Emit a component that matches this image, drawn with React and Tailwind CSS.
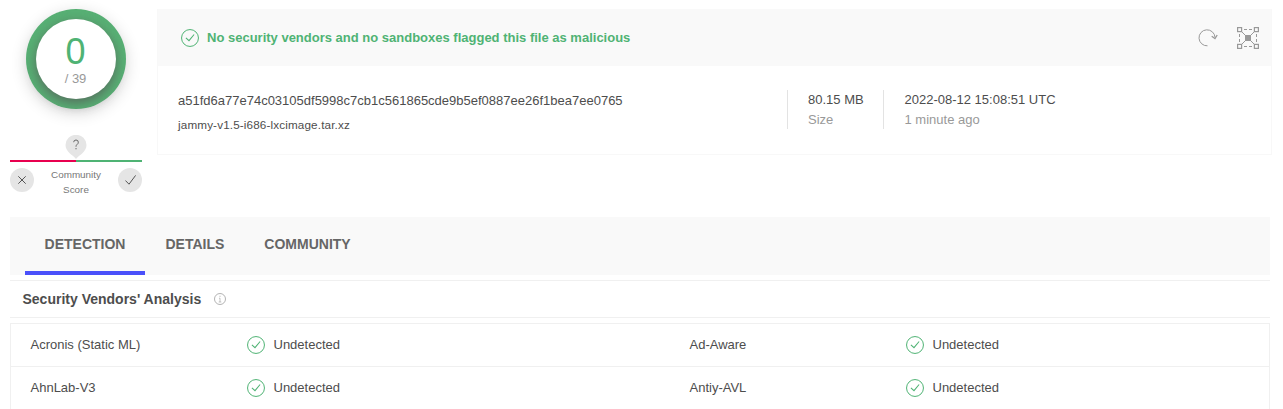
const rows = [
  ["Acronis (Static ML)", "Ad-Aware"],
  ["AhnLab-V3", "Antiy-AVL"],
];

function CheckCircle({ className = "" }) {
  return (
    <svg className={`h-[18px] w-[18px] shrink-0 ${className}`} viewBox="0 0 18 18" fill="none" stroke="#4fb374">
      <circle cx="9" cy="9" r="8.45" strokeWidth="1" />
      <path d="M4.9 8.8 8 11.7 13.1 5.5" strokeWidth="1.05" />
    </svg>
  );
}

function Refresh() {
  return (
    <svg className="mr-px h-5 w-5 shrink-0" viewBox="0 0 20 20" fill="none" stroke="#999" strokeWidth="1">
      <path d="M9.500 17.800A8 8 0 1 1 17 9.300" />
      <path d="M13.700 8.300 17 10.500 19.200 7" strokeWidth="1.3" />
    </svg>
  );
}

function GraphIcon() {
  return (
    <svg className="h-[22px] w-[22px] shrink-0" viewBox="0 0 22 22" fill="none" stroke="#999">
      <path d="M5 5 17 17M17 5 5 17" strokeWidth="1" />
      <path d="M7 2.5h3M12 2.5h3M7 19.5h3M12 19.5h3M2.5 7v3M2.5 12v3M19.5 7v3M19.5 12v3" strokeWidth="1" />
      <rect x="8" y="8" width="6" height="6" fill="#999" stroke="none" />
      <g fill="#f9f9f9" strokeWidth="1.2">
        <rect x="0.6" y="0.6" width="4" height="4" />
        <rect x="17.4" y="0.6" width="4" height="4" />
        <rect x="0.6" y="17.4" width="4" height="4" />
        <rect x="17.4" y="17.4" width="4" height="4" />
      </g>
    </svg>
  );
}

function Score() {
  return (
    <div className="flex w-[132px] shrink-0 flex-col items-center">
      <div className="flex h-[100px] w-[100px] items-center justify-center rounded-full bg-[#57b074] shadow-[0_4px_16px_rgba(0,0,0,0.16)]">
        <div className="flex h-20 w-20 flex-col items-center rounded-full bg-white pr-px pt-[14px] shadow-[0_4px_12px_rgba(85,85,85,0.75)]">
          <div className="h-[38px] text-[36px] leading-[38px] text-[#4fb374]">0</div>
          <div className="text-[13px] leading-[16px] text-[#999]">/ 39</div>
        </div>
      </div>
      <div className="mr-px mt-[26px] h-[25px]">
        <svg className="h-[25px] w-[22px]" viewBox="0 0 22 25">
          <path d="M11 24C8 20 .5 17 .5 10A10.500 10.200 0 0 1 21.500 10C21.500 17 14 20 11 24Z" fill="#e5e5e5" />
          <path d="M8.700 7.200Q8.700 5 11 5Q13.300 5 13.300 7.200Q13.300 8.700 12 9.500Q11 10.300 11 11.700M11 13V14.300" fill="none" stroke="#666" strokeWidth="1" />
        </svg>
      </div>
      <div className="flex h-[2px] w-full">
        <div className="w-1/2 bg-[#e8004f]" />
        <div className="w-1/2 bg-[#4fb374]" />
      </div>
      <div className="mt-[6px] flex w-full items-start justify-between">
        <div className="flex h-6 w-6 items-center justify-center rounded-full bg-[#e5e5e5]">
          <svg className="h-2 w-2" viewBox="0 0 8 8" fill="none" stroke="#555"><path d="m.3.3 7.400 7.400M7.700.3.3 7.700" /></svg>
        </div>
        <div className="-mt-px text-center text-[9.900px] leading-[15px] text-[#777]">Community<br />Score</div>
        <div className="flex h-6 w-6 items-center justify-center rounded-full bg-[#e5e5e5]">
          <svg className="h-[10px] w-[11px]" viewBox="0 0 11 10" fill="none" stroke="#555"><path d="M.4 5.500 4 9.200 10.600.4" /></svg>
        </div>
      </div>
    </div>
  );
}

function Vendor({ name }) {
  return (
    <div className="flex w-[659px] shrink-0 items-center">
      <div className="w-[216px] text-[#4d4d4d]">{name}</div>
      <CheckCircle />
      <div className="ml-[9px] text-[#4d4d4d]">Undetected</div>
    </div>
  );
}

export default function App() {
  return (
    <div className="h-[409px] overflow-hidden bg-white pl-[10px] pt-[9px] font-['Liberation_Sans',Arial,sans-serif] text-[13px] leading-5 text-[#4d4d4d]">
      <div className="flex h-[208px]">
        <Score />
        <div className="ml-[15px] h-[146px] w-[1115px] border border-t-0 border-[#f8f8f8]">
          <div className="flex h-[57px] items-center bg-[#f9f9f9] pl-[23px] pr-[12px]">
            <CheckCircle className="mt-px" />
            <div className="ml-2 flex-1 font-bold text-[#4fb374]">No security vendors and no sandboxes flagged this file as malicious</div>
            <Refresh />
            <div className="ml-[18px]"><GraphIcon /></div>
          </div>
          <div className="flex pl-5 pt-[24px]">
            <div className="w-[609px]">
              <div className="mt-px">a51fd6a77e74c03105df5998c7cb1c561865cde9b5ef0887ee26f1bea7ee0765</div>
              <div className="mt-1 text-[11.7px] tracking-[0.14px]">jammy-v1.5-i686-lxcimage.tar.xz</div>
            </div>
            <div className="h-[39px] w-[96px] border-l border-[#e3e3e3] pl-5">
              <div>80.15 MB</div>
              <div className="text-[#999]">Size</div>
            </div>
            <div className="h-[39px] border-l border-[#e3e3e3] pl-[20.500px]">
              <div>2022-08-12 15:08:51 UTC</div>
              <div className="text-[#999]">1 minute ago</div>
            </div>
          </div>
        </div>
      </div>

      <div className="flex h-[58px] w-[1260px] bg-[#f9f9f9] pl-[15px] text-[14px] font-bold leading-[54px] text-[#666]">
        <div className="w-[120px] border-b-4 border-[#4a50fa] text-center">DETECTION</div>
        <div className="ml-[20.500px]">DETAILS</div>
        <div className="ml-10">COMMUNITY</div>
      </div>

      <div className="mt-[5px] flex h-[38px] w-[1260px] items-center border-y border-[#f0f0f0] pl-[12.500px]">
        <div className="text-[14px] font-bold">Security Vendors' Analysis</div>
        <svg className="ml-[12.500px] h-3 w-3" viewBox="0 0 12 12" fill="none" stroke="#aaa">
          <circle cx="6" cy="6" r="5.500" strokeWidth=".9" />
          <path d="M6 2.700V4M5 5.200h1V9M4.700 9h2.600" strokeWidth=".7" />
        </svg>
      </div>

      <div className="mt-[5px] h-[90px] w-[1260px] border border-b-0 border-[#f0f0f0]">
        {rows.map(([left, right]) => (
          <div key={left} className="flex h-[43px] border-b border-[#f0f0f0] pl-[19.500px]">
            <Vendor name={left} />
            <Vendor name={right} />
          </div>
        ))}
      </div>
    </div>
  );
}
